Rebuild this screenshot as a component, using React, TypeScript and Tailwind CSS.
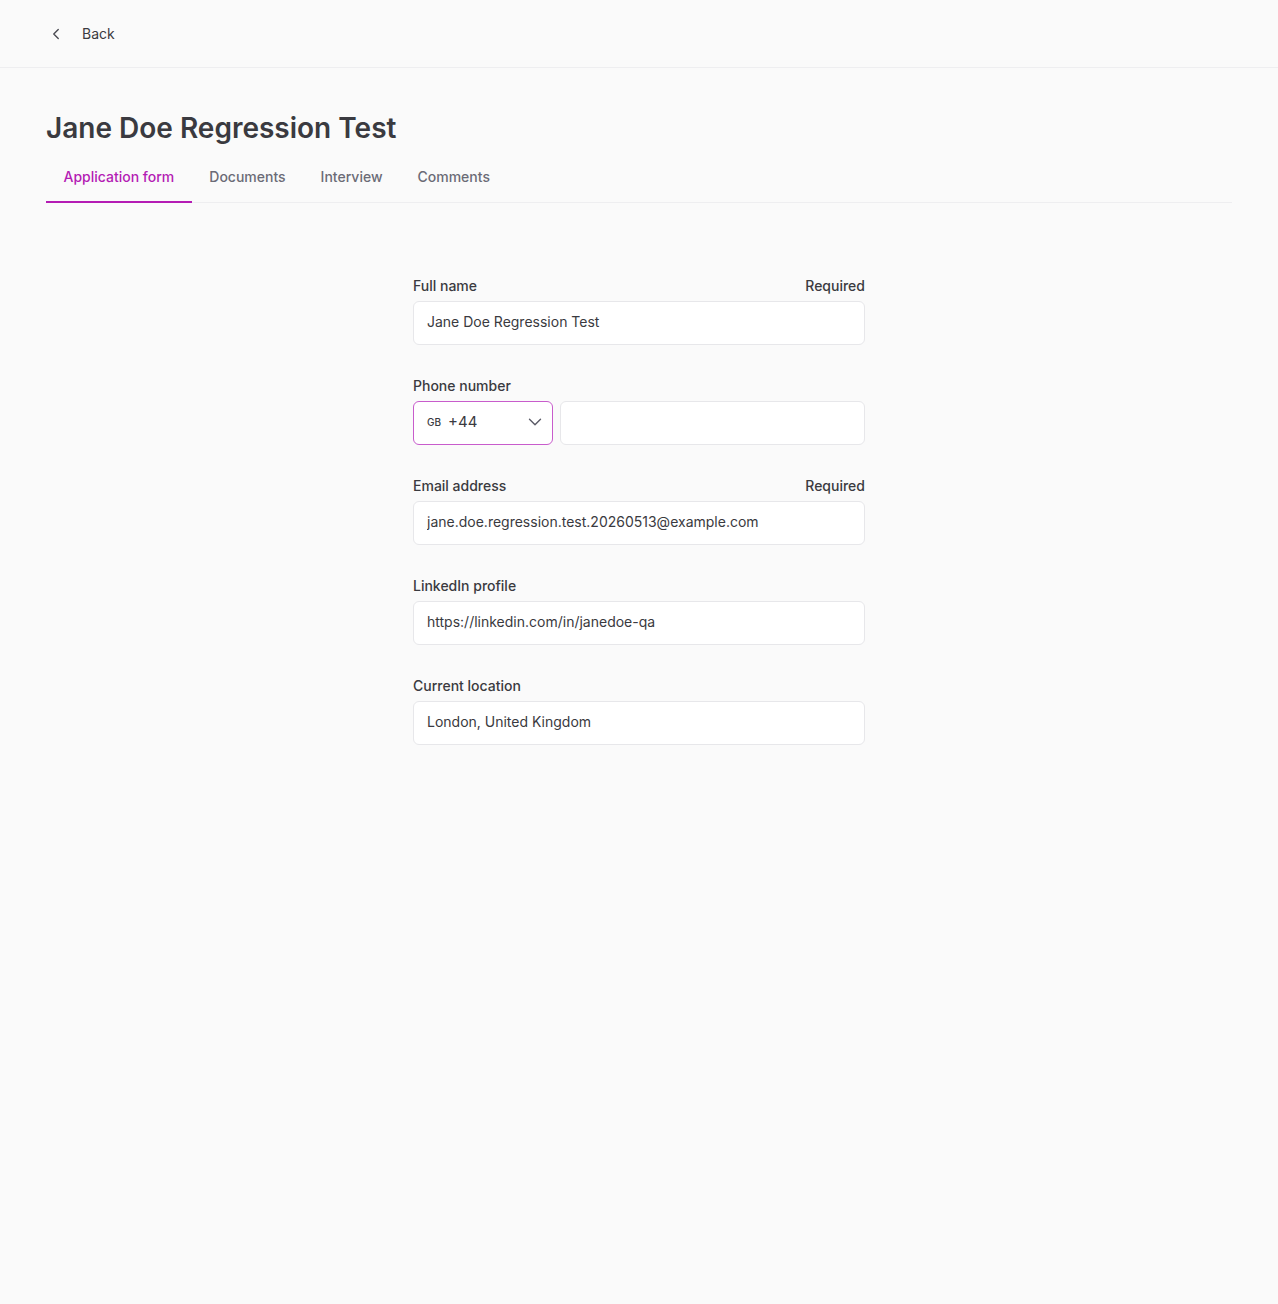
import { ChevronDown, ChevronLeft } from "lucide-react";

const tabs = ["Application form", "Documents", "Interview", "Comments"];

function Field({ label, value, required }: { label: string; value: string; required?: boolean }) {
  return (
    <div className="flex flex-col gap-[5px]">
      <div className="flex items-center justify-between text-sm font-medium text-[#3a3a40]">
        <span>{label}</span>
        {required && <span>Required</span>}
      </div>
      <input
        readOnly
        value={value}
        className="h-11 w-full rounded-md border border-[#e7e7ea] bg-white px-[13px] pb-[3px] text-sm text-[#3a3a40] outline-none"
      />
    </div>
  );
}

export default function App() {
  return (
    <div className="min-h-[1304px] bg-[#fafafa] font-['Inter',sans-serif] text-[#3a3a40]">
      <header className="flex h-[68px] items-center border-b border-[#eeeef0] px-[47px]">
        <button className="flex items-center gap-[17px] text-sm text-[#3a3a40]">
          <ChevronLeft size={18} strokeWidth={1.8} className="text-[#4a4a52]" />
          <span>Back</span>
        </button>
      </header>

      <main className="px-[46px]">
        <h1 className="mt-[43px] text-[28px] font-semibold leading-[34px] text-[#3a3a40]">
          Jane Doe Regression Test
        </h1>
        <nav className="mt-[14px] flex border-b border-[#eeeef0]">
          {tabs.map((t, i) => (
            <div
              key={t}
              className={
                i === 0
                  ? "-mb-px border-b-2 border-[#b41cb4] px-[17.5px] pb-[14px] pt-[8px] text-sm font-medium text-[#b41cb4]"
                  : "-mb-px border-b-2 border-transparent px-[17.5px] pb-[14px] pt-[8px] text-sm font-medium text-[#6b6b76]"
              }
            >
              {t}
            </div>
          ))}
        </nav>

        <form className="mx-auto mt-[73px] flex w-[452px] flex-col gap-[31px]">
          <Field label="Full name" value="Jane Doe Regression Test" required />

          <div className="flex flex-col gap-[5px]">
            <div className="text-sm font-medium text-[#3a3a40]">Phone number</div>
            <div className="flex gap-[7px]">
              <div className="flex h-11 w-[140px] items-center rounded-md border border-[#c85ccc] bg-white pb-[2px] pl-[13px] pr-[6px]">
                <span className="text-[10px] font-medium text-[#3a3a40]">GB</span>
                <span className="ml-[7px] text-[15px] text-[#3a3a40]">+44</span>
                <ChevronDown size={22} strokeWidth={1.5} className="ml-auto text-[#5a5a66]" />
              </div>
              <input
                readOnly
                className="h-11 flex-1 rounded-md border border-[#e7e7ea] bg-white px-[13px] text-sm outline-none"
              />
            </div>
          </div>

          <Field label="Email address" value="jane.doe.regression.test.20260513@example.com" required />
          <Field label="LinkedIn profile" value="https://linkedin.com/in/janedoe-qa" />
          <Field label="Current location" value="London, United Kingdom" />
        </form>
      </main>
    </div>
  );
}
